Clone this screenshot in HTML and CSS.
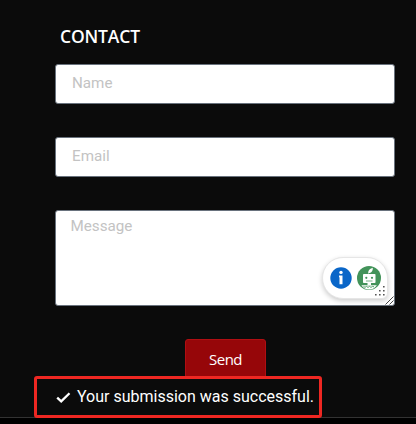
FILE: index.html
```
<!DOCTYPE html>
<html lang="en">
<head>
    <meta charset="UTF-8">
    <meta name="viewport" content="width=device-width, initial-scale=1.0">
    <title>Contact</title>
    <link rel="stylesheet" href="styles.css">
</head>
<body>
    <section class="contact">
        <h2>CONTACT</h2>
        <form class="contact-form">
            <input type="text" class="field" placeholder="Name">
            <input type="email" class="field" placeholder="Email">
            <div class="message-box">
                <textarea class="field message" placeholder="Message"></textarea>
                <!-- writing assistant widget -->
                <div class="assistant">
                    <svg width="22" height="22" viewBox="0 0 22 22">
                        <circle cx="11" cy="11" r="10.7" fill="#0a66c8"/>
                        <circle cx="11" cy="5.4" r="1.7" fill="#fff"/>
                        <path d="M9 8.500h3.500v8.700H9.500V10.300H9z" fill="#fff"/>
                    </svg>
                    <svg width="24" height="24" viewBox="0 0 24 24">
                        <circle cx="12" cy="12" r="12" fill="#43935a"/>
                        <path d="M11.200 7.700c-.3-3 1-5 4.600-6 .2 2.800-1 4.800-3.400 5.400z" fill="#fff"/>
                        <rect x="6" y="8" width="12.500" height="9" rx=".8" fill="#fff"/>
                        <circle cx="9.300" cy="11.800" r="1.100" fill="#43935a"/>
                        <circle cx="15" cy="11.800" r="1.100" fill="#43935a"/>
                        <path d="M9 15h6.500" stroke="#43935a" stroke-width=".7"/>
                        <path d="M10.500 17h3.500v2h-3.500z" fill="#fff"/>
                        <path d="M4.300 19.200h15.600q-2.900 4.200-7.800 4.200t-7.800-4.200z" fill="#fff"/>
                        <path d="M6.500 20.400l1.500.9 1.500-.9 1.500 1 1.500-1 1.500 1 1.500-1 1.500.4" fill="none" stroke="#43935a" stroke-width=".9"/>
                    </svg>
                    <svg class="drag-dots" width="10" height="10" viewBox="0 0 10 10" fill="#555">
                        <path d="M8 0h1.600v1.600H8zM4 4h1.600v1.600H4zM8 4h1.600v1.600H8zM0 8h1.600v1.600H0zM4 8h1.600v1.600H4zM8 8h1.600v1.600H8z"/>
                    </svg>
                </div>
                <svg class="grip" width="9" height="9" viewBox="0 0 9 9">
                    <path d="M.5 8.500l8-8M4.500 8.500l4-4" stroke="#444" stroke-width="1"/>
                </svg>
            </div>
            <button type="button" class="send">Send</button>
        </form>
        <div class="notice">
            <svg width="15" height="11" viewBox="0 0 15 11">
                <path d="M1.200 5.600l4 3.800L13.500 1.300" fill="none" stroke="#fff" stroke-width="2.300"/>
            </svg>
            <span>Your submission was successful.</span>
        </div>
    </section>
    <footer></footer>
</body>
</html>
```
FILE: styles.css
```
* {
    box-sizing: border-box;
}

body {
    margin: 0;
    height: 424px;
    display: flex;
    flex-direction: column;
    overflow: hidden;
    background-color: #0b0b0b;
    color: #fff;
    font-family: Roboto, sans-serif;
}

.contact {
    height: 417px;
    padding: 24px 21px 0 55px;
}

h2 {
    margin: 0 0 16px 5px;
    font: 600 17.5px/24px "Open Sans", sans-serif;
    letter-spacing: -0.15px;
}

.contact-form {
    display: flex;
    flex-direction: column;
    gap: 33px;
}

.field {
    display: block;
    width: 100%;
    height: 40px;
    margin: 0;
    padding: 0 16px 2px;
    border: 1px solid #69727d;
    border-radius: 3px;
    background-color: #fff;
    font: 15.2px/18px Roboto, sans-serif;
}

.field::placeholder {
    color: #c3c3c3;
    opacity: 1;
}

.message-box {
    position: relative;
}

.message {
    height: 96px;
    padding: 6px 14.5px;
    resize: none;
}

.assistant {
    position: absolute;
    top: 47px;
    right: 7px;
    width: 66px;
    height: 42px;
    display: flex;
    align-items: center;
    gap: 5px;
    padding-left: 7px;
    border: 1px solid #e6e6e6;
    border-radius: 21px 21px 6px 21px;
    background-color: #fff;
    box-shadow: 0 2px 5px rgba(0, 0, 0, 0.2);
}

.drag-dots {
    position: absolute;
    right: 2px;
    bottom: 2px;
}

.grip {
    position: absolute;
    right: 1px;
    bottom: 1px;
}

.send {
    align-self: center;
    width: 81px;
    height: 40px;
    margin-left: 1px;
    padding: 0 0 1px;
    border: 1px solid #b00e12;
    border-radius: 3px;
    background-color: #960609;
    color: #fff;
    font: 15px/20px "Open Sans", sans-serif;
    letter-spacing: -0.5px;
}

.notice {
    position: relative;
    display: flex;
    align-items: center;
    gap: 6px;
    width: 288px;
    height: 42px;
    margin: -3px 0 0 -21px;
    padding: 0 0 2px 19px;
    border: 3px solid #ee2722;
    border-radius: 3px;
    font-size: 16px;
    white-space: nowrap;
}

.notice svg {
    position: relative;
    top: 1px;
}

footer {
    flex: 1;
    border-top: 1px solid #333;
    background-color: #000;
}
```
